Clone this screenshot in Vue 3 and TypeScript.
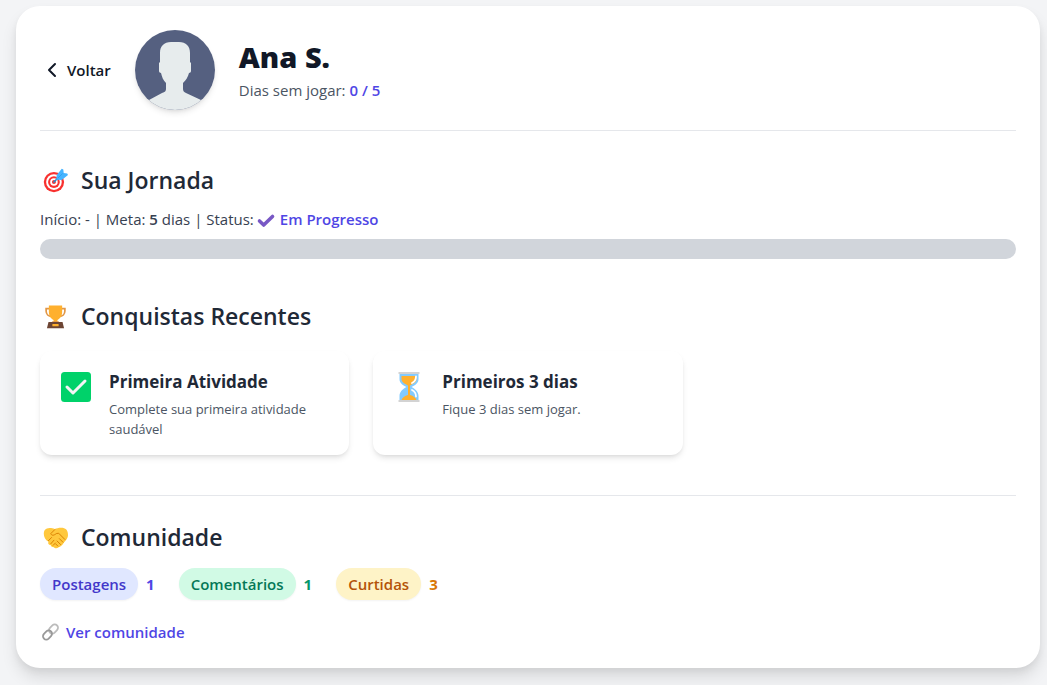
<script setup lang="ts">
interface Achievement {
  icon: 'check' | 'hourglass'
  title: string
  description: string
}

interface Stat {
  label: string
  count: number
  tone: 'indigo' | 'green' | 'amber'
}

const achievements: Achievement[] = [
  { icon: 'check', title: 'Primeira Atividade', description: 'Complete sua primeira atividade saudável' },
  { icon: 'hourglass', title: 'Primeiros 3 dias', description: 'Fique 3 dias sem jogar.' },
]

const stats: Stat[] = [
  { label: 'Postagens', count: 1, tone: 'indigo' },
  { label: 'Comentários', count: 1, tone: 'green' },
  { label: 'Curtidas', count: 3, tone: 'amber' },
]

const daysClean = 0
const goal = 5
</script>

<template>
  <div class="page">
    <main class="profile">
      <header class="top">
        <button type="button" class="back">
          <svg width="24" height="24" viewBox="0 0 24 24" fill="none" stroke="currentColor" stroke-width="2" stroke-linecap="round" stroke-linejoin="round" aria-hidden="true">
            <path d="M15 6 9 12l6 6" />
          </svg>
          Voltar
        </button>
        <svg class="avatar" viewBox="0 0 80 80" role="img" aria-label="Foto de Ana S.">
          <rect width="80" height="80" fill="#556080" />
          <path fill="#e7eced" d="M36 12h8c7 0 11 4 11 11v9l1 1v8c0 1-1 2-2 2-1 4-3 7-6 10v6c0 2 1 3 3 4l15 7v12H14V70l13-7c3-1 4-2 4-4v-6c-3-3-4-6-5-10-1 0-2-1-2-2v-8l1-1v-9c0-7 4-11 11-11z" />
        </svg>
        <div>
          <h1>Ana S.</h1>
          <p class="days">Dias sem jogar: <strong>{{ daysClean }} / {{ goal }}</strong></p>
        </div>
      </header>

      <section class="journey">
        <h2>
          <svg class="emoji" viewBox="0 0 32 32" aria-hidden="true">
            <circle cx="14" cy="18" r="13" fill="#f8312f" />
            <circle cx="14" cy="18" r="10" fill="#fff" />
            <circle cx="14" cy="18" r="7.5" fill="#f8312f" />
            <circle cx="14" cy="18" r="4.8" fill="#fff" />
            <circle cx="14" cy="18" r="2.6" fill="#f8312f" />
            <path d="M14 18 22 10" stroke="#1c8fd4" stroke-width="2" stroke-linecap="round" />
            <path fill="#46b4ff" d="m17 15 .5-6 6.500-8 2 1 .5 4.500 4.500.500 1 2-8 6.500z" />
            <path d="m19 13 6-6" stroke="#2a9bee" stroke-width="1" />
          </svg>
          Sua Jornada
        </h2>
        <p class="summary">
          <span>Início: - | Meta: <strong>{{ goal }}</strong> dias | Status:</span>
          <svg class="tick" width="20" height="20" viewBox="0 0 20 20" aria-hidden="true">
            <path d="m3.500 12 4.200 4L16.500 7.500" fill="none" stroke="#7858c5" stroke-width="3.600" stroke-linecap="round" stroke-linejoin="round" />
          </svg>
          <span class="status">Em Progresso</span>
        </p>
        <div class="bar" role="progressbar" aria-label="Progresso" :aria-valuenow="daysClean" aria-valuemin="0" :aria-valuemax="goal">
          <div class="fill" :style="{ width: (daysClean / goal) * 100 + '%' }"></div>
        </div>
      </section>

      <section class="recent">
        <h2>
          <svg class="emoji" viewBox="0 0 32 32" aria-hidden="true">
            <path d="M8 6H4v3c0 4 3 7 7 7m13-10h4v3c0 4-3 7-7 7" fill="none" stroke="#e19747" stroke-width="2.200" />
            <path d="M7.500 2h17v8c0 6-3 9-6 10.500V24h-5v-3.500c-3-1.500-6-4.500-6-10.500z" fill="#ffb02e" />
            <path d="M12 22h8l1 2H11z" fill="#e19747" />
            <path d="M7 23h18l2 8H5z" fill="#6d4534" />
            <rect x="12" y="25.500" width="8" height="3" rx=".5" fill="#ffb02e" />
          </svg>
          Conquistas Recentes
        </h2>
        <div class="cards">
          <article v-for="item in achievements" :key="item.title" class="card">
            <svg v-if="item.icon === 'check'" class="badge" viewBox="0 0 32 32" aria-hidden="true">
              <rect x="1" y="1" width="30" height="30" rx="3.500" fill="#00d26a" />
              <path d="m7 16 6 6L25 10" fill="none" stroke="#f4f4f4" stroke-width="3" stroke-linecap="round" stroke-linejoin="round" />
            </svg>
            <svg v-else class="badge" viewBox="0 0 32 32" aria-hidden="true">
              <path d="M6.500 3h19v5c0 4-3 6-7 8 4 2 7 5 7 9v4h-19v-4c0-4 3-7 7-9-4-2-7-4-7-8z" fill="#83cbff" />
              <path d="M8.500 5h15v3c0 3.500-4 5-6.500 6.500V24c3.500 1 5.500 2.500 6.500 5h-15c1-2.500 3-4 6.500-5v-9.500c-2.500-1.500-6.500-3-6.500-6.500z" fill="#ffb02e" />
              <path d="M23 5.500c0 3.500-1 5-4 6.500m0 7c3 1.500 4 3.500 4 6.500" fill="none" stroke="#fff" stroke-width="1.800" stroke-linecap="round" />
              <path d="M5.500 2h21M5.500 30h21" stroke="#d3d3d3" stroke-width="2" />
            </svg>
            <div>
              <h3>{{ item.title }}</h3>
              <p>{{ item.description }}</p>
            </div>
          </article>
        </div>
      </section>

      <section class="community">
        <h2>
          <svg class="emoji" viewBox="0 0 32 32" aria-hidden="true">
            <path fill="#ffc83d" d="M5 4.500c3-1.500 7-.5 10 .5 3-1 8-2.500 12-1 4 1 5 5 5 9 0 3-2 6-5 9-2 4-5 6-7 6.500-2 2-5 1.500-6 0-2 0-4-1-4-2.500-3-.5-4-2-3-4.500-4-2-6-6-6-10.500 0-3.500 1.500-5.500 4-6.500z" />
            <path fill="none" stroke="#d67d00" stroke-width="1.200" stroke-linecap="round" stroke-linejoin="round" d="m15 6-5 5c1 3 4 2.500 7 0l3-.500 8 8M7 20l4-4m-1 8 4-4.500M13 26l3-3m3 4-2.500-2.500M22.500 25 18 20.500m7.500 1.500L21 17.500" />
          </svg>
          Comunidade
        </h2>
        <ul class="stats">
          <li v-for="stat in stats" :key="stat.label" :class="stat.tone">
            <span class="pill">{{ stat.label }}</span>
            <span class="count">{{ stat.count }}</span>
          </li>
        </ul>
        <a class="more" href="#comunidade">
          <svg width="20" height="20" viewBox="0 0 20 20" aria-hidden="true" fill="none" stroke-width="1.800">
            <rect x="8.500" y="3.700" width="10" height="6.600" rx="3.300" stroke="#bcbcbc" transform="rotate(-45 13.500 7)" />
            <rect x="2.500" y="9.700" width="10" height="6.600" rx="3.300" stroke="#999" transform="rotate(-45 7.500 13)" />
          </svg>
          Ver comunidade
        </a>
      </section>
    </main>
  </div>
</template>

<style>
body {
  margin: 0;
  background: #f3f4f6;
}
</style>

<style scoped>
.page {
  box-sizing: border-box;
  min-height: 100vh;
  padding: 6px 7px 16px 16px;
  background: #f3f4f6;
  color: #1f2937;
  font: 400 15px/24px "Segoe UI", "Open Sans", "Noto Sans", sans-serif;
}

.profile {
  box-sizing: border-box;
  max-width: 1024px;
  padding: 24px;
  border-radius: 24px;
  background: #fff;
  box-shadow: 0 10px 15px rgba(0, 0, 0, 0.1), 0 4px 6px rgba(0, 0, 0, 0.05);
}

h1,
h2,
h3,
p,
ul {
  margin: 0;
  padding: 0;
}

.top {
  display: flex;
  align-items: center;
  gap: 24px;
  padding-bottom: 20px;
  border-bottom: 1px solid #e5e7eb;
}

.back {
  display: flex;
  align-items: center;
  gap: 3px;
  padding: 0;
  border: 0;
  background: none;
  color: #111827;
  font: inherit;
  font-weight: 600;
  cursor: pointer;
}

.avatar {
  width: 80px;
  height: 80px;
  border-radius: 50%;
  box-shadow: 0 4px 6px -1px rgba(0, 0, 0, 0.1), 0 2px 4px -2px rgba(0, 0, 0, 0.1);
}

h1 {
  color: #111827;
  font-size: 29px;
  font-weight: 800;
  line-height: 38px;
}

.days {
  margin-top: 2px;
  color: #4b5563;
}

.days strong,
.status {
  color: #4f46e5;
  font-weight: 600;
}

h2 {
  display: flex;
  align-items: center;
  gap: 12px;
  font-size: 23px;
  font-weight: 600;
  line-height: 32px;
}

.emoji {
  width: 25px;
  height: 25px;
  margin: 0 1px 0 3px;
}

.journey {
  margin-top: 33px;
}

.summary {
  display: flex;
  align-items: center;
  margin-top: 11px;
  color: #374151;
}

.summary strong {
  font-weight: 600;
}

.tick {
  margin: 0 4px 0 2px;
}

.bar {
  height: 20px;
  margin-top: 8px;
  border-radius: 10px;
  background: #d1d5db;
  overflow: hidden;
}

.fill {
  height: 100%;
  background: #4f46e5;
}

.recent {
  margin-top: 41px;
}

.cards {
  display: grid;
  grid-template-columns: repeat(3, 1fr);
  gap: 24px;
  margin-top: 19px;
}

.card {
  display: flex;
  gap: 17px;
  padding: 17px 20px 16px;
  border-radius: 12px;
  background: #fff;
  box-shadow: 0 4px 6px -1px rgba(0, 0, 0, 0.1), 0 2px 4px -2px rgba(0, 0, 0, 0.1);
}

.badge {
  flex: none;
  width: 32px;
  height: 32px;
  margin-top: 3px;
}

h3 {
  font-size: 17px;
  font-weight: 700;
  line-height: 28px;
}

.card p {
  margin-top: 3px;
  color: #4b5563;
  font-size: 13px;
  line-height: 20px;
}

.community {
  margin-top: 40px;
  padding-top: 25px;
  border-top: 1px solid #e5e7eb;
}

.stats {
  display: flex;
  flex-wrap: wrap;
  gap: 24px;
  margin-top: 15px;
  list-style: none;
}

.stats li {
  display: flex;
  align-items: center;
  gap: 8px;
  font-weight: 600;
}

.pill {
  padding: 4px 12px;
  border-radius: 16px;
  box-shadow: 0 1px 2px rgba(0, 0, 0, 0.05);
}

.count {
  font-weight: 700;
}

.indigo .pill { background: #e0e7ff; color: #4338ca; }
.indigo .count { color: #4f46e5; }
.green .pill { background: #d1fae5; color: #047857; }
.green .count { color: #059669; }
.amber .pill { background: #fef3c7; color: #b45309; }
.amber .count { color: #d97706; }

.more {
  display: inline-flex;
  align-items: center;
  gap: 6px;
  margin-top: 20px;
  color: #4f46e5;
  font-weight: 600;
  text-decoration: none;
  vertical-align: top;
}
</style>
